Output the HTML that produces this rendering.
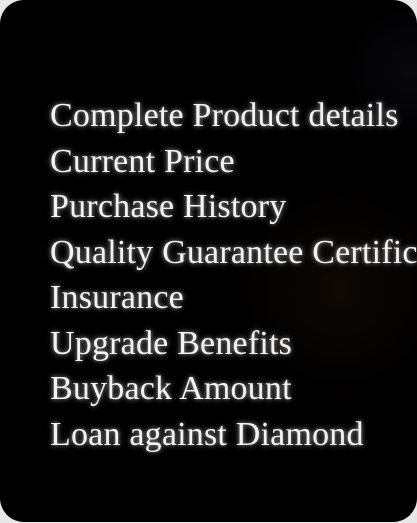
<!DOCTYPE html>
<html><head><style>
html,body{margin:0;padding:0;background:#e8e8e8;width:417px;height:523px;overflow:hidden}
.card{position:absolute;left:0;top:0;width:417px;height:522px;border-radius:24px;overflow:hidden;
background:radial-gradient(circle at 340px 290px,rgba(30,18,8,0.45),rgba(0,0,0,0) 110px),radial-gradient(circle at 410px 70px,rgba(20,20,32,0.4),rgba(0,0,0,0) 70px),#000}
.list{position:absolute;left:50px;top:93px;font-family:"Liberation Serif",serif;font-size:34px;line-height:45.5px;color:#f2f2f2;white-space:nowrap;letter-spacing:0.2px;
text-shadow:0 0 4px rgba(255,255,255,0.55),0 0 8px rgba(255,255,255,0.25)}
</style></head><body>
<div class="card"><div class="list">
<div>Complete Product details</div>
<div>Current Price</div>
<div>Purchase History</div>
<div>Quality Guarantee Certificate</div>
<div>Insurance</div>
<div>Upgrade Benefits</div>
<div>Buyback Amount</div>
<div>Loan against Diamond</div>
</div></div>
</body></html>
